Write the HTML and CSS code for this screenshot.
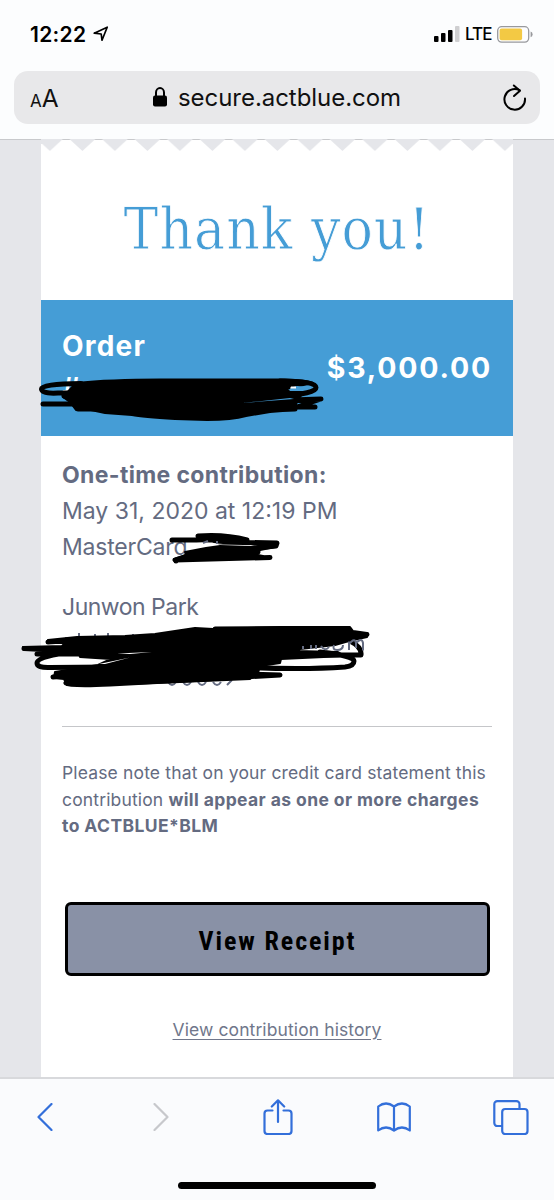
FILE: index.html
```
<!DOCTYPE html>
<html lang="en">
<head>
<meta charset="utf-8">
<title>Thank you!</title>
<link rel="stylesheet" href="styles.css">
</head>
<body>
<div class="phone">
  <header class="browser-head">
    <div class="status">
      <span class="time">12:22</span>
      <svg class="location" width="16" height="16" viewBox="0 0 16 16"><path d="M1.2 7.2 14.2 1.2 9 14.2 8.2 8Z"/></svg>
      <svg class="signal" width="26" height="16" viewBox="0 0 26 16"><rect x="0" y="10" width="4.5" height="6" rx="1"/><rect x="7" y="7" width="4.5" height="9" rx="1"/><rect x="14" y="4" width="4.5" height="12" rx="1"/><rect class="weak" x="21" y="0" width="4.5" height="16" rx="1"/></svg>
      <span class="lte">LTE</span>
      <svg class="battery" width="36" height="17" viewBox="0 0 36 17"><rect class="case" x=".7" y=".7" width="31" height="15.4" rx="4"/><rect class="charge" x="2.6" y="2.6" width="22.5" height="11.6" rx="2"/><path class="tip" d="M33.6 5.6q2 .5 2 2.8t-2 2.8Z"/></svg>
    </div>
    <div class="address">
      <span class="reader"><span class="small-a">A</span>A</span>
      <svg class="lock" width="14" height="20" viewBox="0 0 14 20"><rect x="0" y="8.5" width="14" height="11" rx="2"/><path d="M3 9V5.5a4 4.4 0 0 1 8 0V9"/></svg>
      <span class="url">secure.actblue.com</span>
      <svg class="reload" width="24" height="28" viewBox="0 0 24 28"><path d="M22 14.5A10.3 10.3 0 1 1 16.5 6.2"/><path d="M10.8 1.5 17 6.7 11 12"/></svg>
    </div>
  </header>

  <main class="page">
    <section class="receipt">
      <svg class="teeth" width="472" height="13" viewBox="0 0 472 13">
        <defs><pattern id="tooth" x="-7.3" y="0" width="32.5" height="13" patternUnits="userSpaceOnUse"><path d="M3.2 0h26L16.2 12Z"/></pattern></defs>
        <path class="edge" d="M0 0H10V5H0ZM462 0H472V5H462Z"/>
        <rect width="472" height="13" fill="url(#tooth)"/>
      </svg>
      <h1 class="title"><span class="title-text">Thank you!</span></h1>
      <div class="order">
        <div class="order-label"><div class="order-word">Order</div><div class="order-number">#</div></div>
        <div class="amount">$3,000.00</div>
        <svg class="scribble order-scribble" width="290" height="50" viewBox="35 372 290 50">
          <path class="ink" d="M76 383Q110 379.500 160 379.500H285Q306 380 313 383L294 387 286 389 290 392 304 392 300 397 297 401 295 410 270 412 246 416Q232 420 207 420L175 419Q142 417 132 415L105 413 91 410 76 410 70 402 63 397Z"/>
          <path class="line" d="M81 383.500Q41 384 41.500 389T58 393H110M280 381Q316 381 316 387.500T280 395.500M64 396 92 404 43 404M180 404 321 399 297 407 315 407M78 409 295 409"/>
          <path class="gap" d="M291 387.500 297 386 309 387 290 391ZM242 403 262 401 290 398 294 399Z"/>
          <path class="mark" d="M291 386.500H296V388.500H290Z"/>
        </svg>
      </div>
      <div class="details">
        <p class="kind">One-time contribution:</p>
        <p class="date">May 31, 2020 at 12:19 PM</p>
        <p class="card">MasterCard</p>
        <p class="name">Junwon Park</p>
        <svg class="scribble card-scribble" width="114" height="34" viewBox="168 531 114 34">
          <path class="ink" d="M174 559 187 555 185 552 206 548 220 546 251 547 275 544 275 547 260 550 252 554 263 556 262 559 222 558Z"/>
          <path class="line" d="M172 540H247Q225 534 198 536L220 542 277 543 276 546 190 555 175 560 270 557.500M176 560V561M190 554Q220 548 258 552L250 556"/>
          <path class="gap" d="M190 543.500 203 542.500 223 544 199 546Z"/>
          <path class="hint" d="M203 543 208 541M217 541V544"/>
        </svg>
        <svg class="scribble contact-scribble" width="352" height="64" viewBox="20 624 352 64">
          <path class="hint" d="M66 640V637M79 641V633M95 641V634M108 641V633M133 641V634M168 682Q172 688 176 682M183 682Q187 688 191 682M198 682Q202 688 206 682M213 682Q217 688 221 682M227 685 232 680"/>
          <path class="ink" d="M48 640 77 637 125 636 155 634 195 628 213 629 280 627 350 627 353 631 367 633 367 637 349 641 335 645 300 649 296 651 338 652 345 656 281 659 280 663 260 666 258 673 250 679 180 682 125 684 67 685 64 679 54 678 55 672 98 665 111 659 80 657 79 654 65 655 61 652 24 650 23 647 62 646 65 643 48 643Z"/>
          <path class="line" d="M24 648.500H120M48 642 78 640M215 629 348 628.500M320 636 367 634.500M37 654H90M65 653Q37 657 37 663 37 668 50 667.500L110 667M240 667Q300 670 345 667 354 666 354 661T320 652M260 655 361 655Q362 647 350 641M53 677 110 669M66 683Q70 686 110 684L280 675 210 673"/>
          <path class="hint" d="M303 649V646M311 649V645M316 649V645M334 645Q332 650 337 650Q343 650 343 645M321 646Q325 652 329 647M349 650V641.500M349 644Q355 637 356 643V648M356 643Q362 637 363 643V650.500"/>
          <path class="gap" d="M117 653.500 152 652 130 654ZM99 664 130 657.500 105 664Z"/>
        </svg>
      </div>
      <div class="note">
        <div>Please note that on your credit card statement this</div>
        <div class="note-two">contribution <b>will appear as one or more charges</b></div>
        <div class="note-three"><b>to ACTBLUE*BLM</b></div>
      </div>
      <div class="button"><span class="button-text">View Receipt</span></div>
      <a class="history">View contribution history</a>
    </section>
  </main>

  <footer class="toolbar">
    <nav class="tools">
      <svg width="16" height="28" viewBox="0 0 16 28"><path d="M14.5 1 1.500 14 14.500 27"/></svg>
      <svg class="disabled" width="16" height="28" viewBox="0 0 16 28"><path d="M1.500 1 14.500 14 1.500 27"/></svg>
      <svg class="share" width="30" height="36" viewBox="0 0 30 36"><path d="M9.500 11.500H4.500a3 3 0 0 0-3 3V32a3 3 0 0 0 3 3h21a3 3 0 0 0 3-3V14.500a3 3 0 0 0-3-3H20.500M15 23V1.500M8.800 7.500 15 1.300 21.200 7.500"/></svg>
      <svg class="book" width="34" height="30" viewBox="0 0 34 30"><path d="M17 28.500V4.500Q9-1.500 1.200 4.500V28.500Q9 22.500 17 28.500 25 22.500 32.800 28.500V4.500Q25-1.500 17 4.500"/></svg>
      <svg class="tabs" width="36" height="35" viewBox="0 0 36 35"><path d="M9 26H4.300a3 3 0 0 1-3-3V4.200a3 3 0 0 1 3-3H23.500a3 3 0 0 1 3 3V9"/><rect x="9.200" y="9" width="25.300" height="25" rx="3"/></svg>
    </nav>
    <div class="home"></div>
  </footer>
</div>
</body>
</html>
```
FILE: styles.css
```
* { box-sizing: border-box; }
body { margin: 0; background: #e5e6ea; font-family: Inter, "Liberation Sans", sans-serif; }
p, h1 { margin: 0; }
svg { display: block; flex: none; fill: none; }
.phone { width: 554px; height: 1200px; display: flex; flex-direction: column; overflow: hidden; }

.browser-head { height: 140px; flex: none; background: #fcfdfe; border-bottom: 1px solid #c8c9cc; }
.status { height: 71px; padding: 0 21px 3px 30px; display: flex; align-items: center; color: #000; }
.time { width: 59px; font-size: 21px; font-weight: 600; letter-spacing: .3px; white-space: nowrap; }
.location { margin: 0 0 0 4px; stroke: #000; stroke-width: 1.7; stroke-linejoin: round; }
.signal { margin-left: auto; fill: #000; }
.signal .weak { fill: #cfcfd1; }
.lte { width: 26px; margin-left: 5px; font-size: 17px; font-weight: 500; letter-spacing: -.9px; white-space: nowrap; }
.battery { margin: 0 0 0 6px; }
.case { stroke: #98999d; stroke-width: 1.3; }
.charge { fill: #f3c944; }
.tip { fill: #98999d; }
.address { height: 53px; margin: 0 14px; padding: 0 13px 0 16px; border-radius: 14px; background: #e8e8ea; display: flex; align-items: center; color: #111; }
.reader { width: 123px; font-size: 24.500px; }
.small-a { font-size: 17px; }
.lock { fill: #000; margin-top: -2px; }
.lock path { fill: none; stroke: #000; stroke-width: 2; }
.url { margin-left: 11px; font-size: 24px; letter-spacing: -.05px; white-space: nowrap; }
.reload { margin-left: auto; stroke: #000; stroke-width: 2; stroke-linecap: round; stroke-linejoin: round; }

.page { height: 937px; flex: none; background: #e5e6ea; padding: 0 41px; }
.receipt { height: 937px; background: #fff; display: flex; flex-direction: column; }
.teeth { fill: #e5e6ea; margin-top: -1px; }
.title { height: 148px; padding-top: 45px; text-align: center; line-height: 64px; font-weight: 400; }
.title-text { display: inline-block; font-family: "DejaVu Serif Condensed", "DejaVu Serif", serif; font-stretch: condensed; font-size: 58px; letter-spacing: 1px; color: #459dd6; -webkit-text-stroke: .8px #fff; white-space: nowrap; }
.order { height: 136px; flex: none; background: #459dd6; color: #fff; display: flex; justify-content: space-between; padding: 0 22px 0 21px; position: relative; font-weight: 650; }
.order-label { padding-top: 28px; font-size: 28px; line-height: 36px; letter-spacing: 1.2px; }
.order-number { line-height: 48px; }
.amount { line-height: 136px; font-size: 28.500px; letter-spacing: 1.800px; margin-right: -1px; }
.scribble { position: absolute; overflow: visible; }
.order-scribble { left: -6px; top: 72px; }
.ink { fill: #000; stroke: #000; stroke-width: 2; stroke-linejoin: round; }
.line { stroke: #000; stroke-width: 5; stroke-linecap: round; stroke-linejoin: round; }
.gap { fill: #459dd6; }
.mark { fill: #fff; }
.details { height: 291px; margin: 0 21px; padding-top: 21px; border-bottom: 1px solid #c5c6c9; color: #646b81; font-size: 23px; line-height: 36px; position: relative; }
.details .gap { fill: #fff; }
.hint { stroke: #646b81; stroke-width: 2; }
.kind { font-weight: 650; letter-spacing: .35px; }
.card { letter-spacing: -.2px; }
.name { margin-top: 24px; letter-spacing: -.5px; }
.card-scribble { left: 106px; top: 95px; }
.contact-scribble { left: -42px; top: 188px; }
.note { height: 80px; margin: 33px 21px 62px; color: #646b81; font-size: 17.500px; line-height: 26.600px; letter-spacing: .15px; white-space: nowrap; }
.note b { font-weight: 650; letter-spacing: .4px; }
.button { height: 74px; flex: none; margin: 0 23px 0 24px; padding-top: 3px; background: #8991a6; border: 3px solid #000; border-radius: 6px; display: flex; align-items: center; justify-content: center; color: #000; }
.button-text { font-family: "Roboto Condensed", Roboto, sans-serif; font-stretch: 75%; font-size: 26px; font-weight: 700; letter-spacing: 1.900px; white-space: nowrap; }
.history { align-self: center; margin-top: 42px; color: #70778b; font-size: 17.500px; line-height: 24px; text-decoration: underline; text-underline-offset: 3px; letter-spacing: .1px; white-space: nowrap; }

.toolbar { height: 123px; flex: none; background: #fafbfd; border-top: 2px solid #d8d9dc; }
.tools { height: 76px; padding-left: 37px; display: grid; grid-template-columns: 116px 110px 114px 116px 36px; align-items: center; stroke: #336fda; stroke-width: 2.200; stroke-linecap: round; stroke-linejoin: round; }
.disabled { stroke: #c7c8cc; }
.share { margin-top: -1px; }
.home { width: 198px; height: 7px; margin: 27px auto 0; border-radius: 4px; background: #000; }
```
